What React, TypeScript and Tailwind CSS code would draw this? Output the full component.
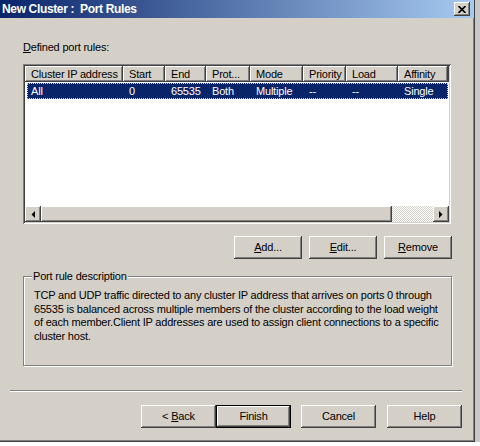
import React from "react";

const raised =
  "shadow-[inset_-1px_-1px_#404040,inset_1px_1px_#ffffff,inset_-2px_-2px_#808080]";

function Btn({
  children,
  width = "w-[75px]",
  isDefault = false,
}: {
  children: React.ReactNode;
  width?: string;
  isDefault?: boolean;
}) {
  if (isDefault) {
    return (
      <div className={`${width} h-[23px] border border-black flex`}>
        <div
          className={`flex-1 flex items-center justify-center bg-[#d4d0c8] ${raised}`}
        >
          {children}
        </div>
      </div>
    );
  }
  return (
    <div
      className={`${width} h-[23px] flex items-center justify-center bg-[#d4d0c8] ${raised}`}
    >
      {children}
    </div>
  );
}

const columns: { label: string; w: string }[] = [
  { label: "Cluster IP address", w: "w-[98px]" },
  { label: "Start", w: "w-[42px]" },
  { label: "End", w: "w-[41px]" },
  { label: "Prot...", w: "w-[44px]" },
  { label: "Mode", w: "w-[53px]" },
  { label: "Priority", w: "w-[43px]" },
  { label: "Load", w: "w-[52px]" },
  { label: "Affinity", w: "w-[50px]" },
];

const row = ["All", "0", "65535", "Both", "Multiple", "--", "--", "Single"];

function Arrow({ dir }: { dir: "left" | "right" }) {
  return (
    <svg width="4" height="7" viewBox="0 0 4 7">
      {dir === "left" ? (
        <polygon points="4,0 4,7 0.5,3.5" fill="#000" />
      ) : (
        <polygon points="0,0 0,7 3.5,3.5" fill="#000" />
      )}
    </svg>
  );
}

export default function App() {
  return (
    <div
      className="w-[480px] h-[446px] bg-white overflow-hidden text-[11px] leading-[13px] tracking-[-0.2px] text-black"
      style={{ fontFamily: '"Liberation Sans", Arial, sans-serif' }}
    >
      <div className="flex h-[442px]">
        <div className="w-[475px] flex flex-col bg-[#d4d0c8] border-r border-b border-r-[#404040] border-b-[#404040] shadow-[inset_-1px_-1px_#808080]">
          {/* title bar */}
          <div className="h-[18px] flex items-center justify-between pl-[2px] pr-[4px] bg-[linear-gradient(to_right,#0a246a,#a6caf0)]">
            <span className="text-white font-bold text-[12px] whitespace-pre tracking-[-0.35px]">
              New Cluster :  Port Rules
            </span>
            <div
              className={`w-[16px] h-[14px] flex items-center justify-center bg-[#d4d0c8] ${raised}`}
            >
              <svg width="8" height="7" viewBox="0 0 8 7">
                <path
                  d="M0.5 0 L7.5 7 M7.5 0 L0.5 7"
                  stroke="#000"
                  strokeWidth="1.6"
                />
              </svg>
            </div>
          </div>

          <div className="flex flex-col pl-[23px]">
            <div className="mt-[23px] h-[13px]">
              <span className="underline underline-offset-1">D</span>efined port
              rules:
            </div>

            {/* list view */}
            <div className="mt-[10px] w-[428px] h-[160px] p-[2px] bg-white shadow-[inset_1px_1px_#808080,inset_-1px_-1px_#ffffff,inset_2px_2px_#404040,inset_-2px_-2px_#d4d0c8]">
              <div className="flex flex-col h-full">
                <div className="flex h-[16px] whitespace-nowrap">
                  {columns.map((c) => (
                    <div
                      key={c.label}
                      className={`${c.w} shrink-0 h-full flex items-center pl-[6px] bg-[#d4d0c8] ${raised}`}
                    >
                      {c.label}
                    </div>
                  ))}
                  <div className={`flex-1 h-full bg-[#d4d0c8] ${raised}`} />
                </div>
                <div className="mt-[1px] ml-[2px] mr-[1px] h-[16px] flex bg-[#0a246a] text-white outline outline-1 outline-dotted outline-[#d4d0c8] -outline-offset-1">
                  {row.map((v, i) => (
                    <div
                      key={i}
                      className={`${i === 0 ? "w-[96px] pl-[4px]" : columns[i].w + " pl-[6px]"} shrink-0 flex items-center`}
                    >
                      {v}
                    </div>
                  ))}
                </div>
                <div className="flex-1" />
                {/* horizontal scroll bar */}
                <div className="h-[16px] flex">
                  <div
                    className={`w-[16px] h-full flex items-center justify-center bg-[#d4d0c8] ${raised}`}
                  >
                    <Arrow dir="left" />
                  </div>
                  <div className={`w-[351px] h-full bg-[#d4d0c8] ${raised}`} />
                  <div className="flex-1 h-full bg-[repeating-conic-gradient(#ffffff_0%_25%,#d4d0c8_0%_50%)] bg-[length:2px_2px]" />
                  <div
                    className={`w-[16px] h-full flex items-center justify-center bg-[#d4d0c8] ${raised}`}
                  >
                    <Arrow dir="right" />
                  </div>
                </div>
              </div>
            </div>

            {/* list actions */}
            <div className="mt-[12px] w-[429px] flex justify-end gap-[7px]">
              <Btn width="w-[68px]">
                <span>
                  <span className="underline underline-offset-1">A</span>dd...
                </span>
              </Btn>
              <Btn width="w-[68px]">
                <span>
                  <span className="underline underline-offset-1">E</span>dit...
                </span>
              </Btn>
              <Btn width="w-[68px]">
                <span>
                  <span className="underline underline-offset-1">R</span>emove
                </span>
              </Btn>
            </div>

            {/* description group */}
            <div className="relative mt-[17px] w-[429px] h-[90px] border border-[#808080] shadow-[inset_1px_1px_#ffffff,1px_1px_#ffffff]">
              <div className="absolute left-[8px] top-[-7px] px-[1px] bg-[#d4d0c8] h-[13px]">
                Port rule description
              </div>
              <div className="pt-[12px] pl-[10px] leading-[13.5px] whitespace-nowrap">
                <div>
                  TCP and UDP traffic directed to any cluster IP address that
                  arrives on ports 0 through
                </div>
                <div>
                  65535 is balanced across multiple members of the cluster
                  according to the load weight
                </div>
                <div>
                  of each member.Client IP addresses are used to assign client
                  connections to a specific
                </div>
                <div>cluster host.</div>
              </div>
            </div>
          </div>

          {/* separator */}
          <div className="mt-[24px] ml-[10px] w-[452px] h-[2px] border-t border-t-[#808080] border-b border-b-white" />

          {/* wizard buttons */}
          <div className="mt-[13px] pl-[141px] flex">
            <Btn>
              <span>
                &lt; <span className="underline underline-offset-1">B</span>ack
              </span>
            </Btn>
            <Btn isDefault>Finish</Btn>
            <div className="w-[10px]" />
            <Btn>Cancel</Btn>
            <div className="w-[11px]" />
            <Btn>Help</Btn>
          </div>
        </div>
        <div className="flex-1 bg-[#c8c8c8]" />
      </div>
    </div>
  );
}
